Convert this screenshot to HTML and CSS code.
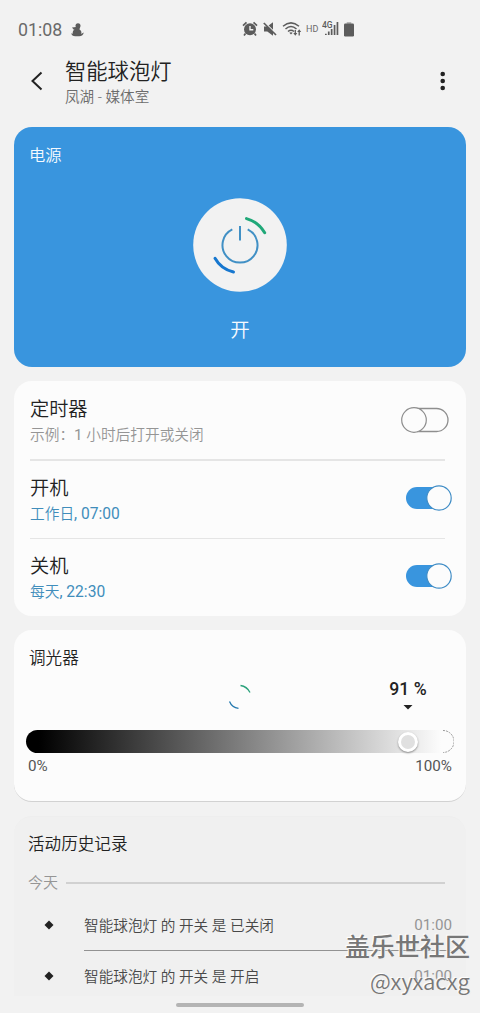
FILE: index.html
```html
<!DOCTYPE html>
<html lang="zh-CN">
<head>
<meta charset="utf-8">
<title>智能球泡灯</title>
<link rel="stylesheet" href="styles.css">
</head>
<body>
<div class="screen">
  <div class="status">
    <span class="clock">01:08</span>
    <svg class="app-icon" width="13" height="14" viewBox="0 0 13 14"><circle cx="7" cy="2.800" r="2.500"/><path d="M5 4h4L8.500 6.400c2 1.200 2.400 3.200 1.500 4.700l2.700-1.600c-.1 2-2 3.800-4.500 3.800H4.300C2 13.300.4 12 .3 10.300l1.500.5C1.300 8.500 2.300 6.700 4.800 6z"/><path d="M1 4.500l4-.5v3l-2.200-.2z"/></svg>
    <div class="status-icons">
      <svg width="16" height="16" viewBox="0 0 16 16"><path d="M1 4.600L4.500 1.300M15 4.600L11.500 1.300M3.500 12.500L2 14.500M12.500 12.500L14 14.500" stroke="#5c5c5c" stroke-width="1.700"/><circle cx="8" cy="8.300" r="6"/><path d="M8 5v3.800h3.300" fill="none" stroke="#f2f2f2" stroke-width="1.400"/></svg>
      <svg class="mute" width="14" height="16" viewBox="0 0 14 16"><path d="M1 5.500h3.300L10 1.300v13.400L4.300 10.500H1z"/><path d="M2.300 2l11 11" stroke="#f2f2f2" stroke-width="1.200"/><path d="M.8 2l12.200 12" stroke="#5c5c5c" stroke-width="1.700"/></svg>
      <svg class="wifi" width="20" height="16" viewBox="0 0 20 16"><g fill="none" stroke="#5c5c5c" stroke-width="1.500"><path d="M1 5.300Q9 -1.500 17 5.300M3.500 8Q9 3 14.500 8M6 10.500Q9 8 12 10.500"/><path d="M13.300 9v4M17.200 10.500v4" stroke-width="1.300"/></g><path d="M7.300 11.800Q9 10.500 10.700 11.800L9 13.600zM11.300 12h4l-2 2.700zM15.200 11h4l-2-2.700z"/></svg>
      <span class="hd">HD</span>
      <svg class="signal" width="18" height="16" viewBox="0 0 18 16"><text x="0" y="7" class="net">4G</text><path d="M3 12.700h1.700v1.300H3zM5.900 10.500h1.700V14H5.900zM8.800 8h1.700v6H8.800zM11.700 4h1.700v10h-1.700zM14.600 1h1.700v13h-1.700z"/></svg>
      <svg class="battery" width="10" height="15" viewBox="0 0 10 15"><path d="M2.700 0h4.600v3H2.700z" opacity=".4"/><rect y="1.500" width="10" height="13" rx="1.200"/></svg>
    </div>
  </div>
  <header class="header">
    <svg class="back" width="12" height="20" viewBox="0 0 12 20"><path d="M10.500 1.500L1.500 10l9 8.500"/></svg>
    <div class="heading"><div class="title">智能球泡灯</div><div class="subtitle">凤湖 - 媒体室</div></div>
    <svg class="more" width="6" height="20" viewBox="0 0 6 20"><circle cx="2.700" cy="3" r="2.300"/><circle cx="2.700" cy="10" r="2.300"/><circle cx="2.700" cy="17" r="2.300"/></svg>
  </header>
  <main class="cards">
    <section class="card power">
      <div class="power-label">电源</div>
      <svg class="power-button" width="94" height="94" viewBox="0 0 94 94"><circle cx="47" cy="47" r="46.800" fill="#f2f2f2"/><g fill="none" stroke-linecap="round"><path d="M39.300 31.400a17.500 17.500 0 1 0 15.400 0M47 28v14.500" stroke="#4190c5" stroke-width="2" stroke-linecap="butt"/><path d="M53.500 20.600Q65 23.500 71.700 34.700" stroke="#20a878" stroke-width="3"/><path d="M22 60.200Q28 71 40.500 74" stroke="#1777cf" stroke-width="3"/></g></svg>
      <div class="power-state">开</div>
    </section>
    <section class="card schedule">
      <div class="row"><div class="labels"><div class="name">定时器</div><div class="detail muted">示例：<span class="digit">1</span> 小时后打开或关闭</div></div>
        <svg class="switch-off" width="48" height="26" viewBox="0 0 48 26"><rect x="5" y="1.500" width="42" height="23" rx="11.500" fill="#fcfcfc" stroke="#8e8e8e" stroke-width="1.300"/><circle cx="13" cy="13" r="12.300" fill="#fcfcfc" stroke="#8e8e8e" stroke-width="1.200"/></svg></div>
      <div class="divider thick"></div>
      <div class="row second"><div class="labels"><div class="name">开机</div><div class="detail">工作日<span class="digits">, 07:00</span></div></div>
        <svg width="47" height="26" viewBox="0 0 47 26"><rect x="1" y="2" width="44" height="22" rx="11" fill="#3995de"/><circle cx="34" cy="13" r="12.200" fill="#fcfcfc" stroke="#408dc6" stroke-width="1.200"/></svg></div>
      <div class="divider"></div>
      <div class="row third"><div class="labels"><div class="name">关机</div><div class="detail">每天<span class="digits">, 22:30</span></div></div>
        <svg width="47" height="26" viewBox="0 0 47 26"><rect x="1" y="2" width="44" height="22" rx="11" fill="#3995de"/><circle cx="34" cy="13" r="12.200" fill="#fcfcfc" stroke="#408dc6" stroke-width="1.200"/></svg></div>
    </section>
    <section class="card dimmer">
      <div class="section-title">调光器</div>
      <div class="reading">
        <svg class="spinner" width="24" height="26" viewBox="0 0 24 26"><g fill="none" stroke-width="1.300"><path d="M12.500 1.500Q19 2.500 22 8.500" stroke="#2ba17b"/><path d="M1.500 17.500Q4 23.500 10.500 24.300" stroke="#2378ae"/></g></svg>
        <div class="value"><span>91 %</span><svg width="10" height="5" viewBox="0 0 10 5"><path d="M.5 0h9L5 4.500z"/></svg></div>
      </div>
      <div class="slider"><svg class="slider-cap" width="12" height="23" viewBox="0 0 12 23"><path d="M1 .5a11 11 0 0 1 0 22"/></svg><div class="thumb"></div></div>
      <div class="limits"><span>0%</span><span>100%</span></div>
    </section>
    <section class="card history">
      <div class="section-title">活动历史记录</div>
      <div class="day"><span>今天</span><i></i></div>
      <div class="event"><svg width="10" height="10" viewBox="0 0 10 10"><path d="M5 .5L9.500 5 5 9.500.5 5z"/></svg><span>智能球泡灯 的 开关 是 已关闭</span><time>01:00</time></div>
      <div class="event-line"></div>
      <div class="event"><svg width="10" height="10" viewBox="0 0 10 10"><path d="M5 .5L9.500 5 5 9.500.5 5z"/></svg><span>智能球泡灯 的 开关 是 开启</span><time>01:00</time></div>
    </section>
  </main>
  <div class="nav"></div>
  <div class="watermark"><div class="community">盖乐世社区</div><div class="user">@xyxacxg</div></div>
</div>
</body>
</html>
```
FILE: styles.css
```css
* { box-sizing: border-box; }
body {
  margin: 0;
  background: #f2f2f2;
  color: #222;
  font-family: Roboto, "Noto Sans CJK SC", sans-serif;
  font-weight: 350;
}
svg { display: block; flex: none; }
.screen { position: relative; width: 480px; height: 1013px; overflow: hidden; white-space: nowrap; }
.status { display: flex; align-items: center; height: 58px; padding: 1px 0 0 18px; color: #6a6a6a; }
.clock { width: 45px; font-size: 17.8px; font-weight: 400; line-height: 20px; }
.app-icon { margin-left: 8px; fill: #5c5c5c; }
.status-icons { display: flex; align-items: center; margin: -1px 0 0 158px; fill: #5c5c5c; }
.mute { margin-left: 5px; }
.wifi { margin-left: 5px; }
.hd { width: 12px; margin-left: 4px; font-size: 9px; font-weight: 400; line-height: 12px; }
.signal { margin-left: 4px; }
.net { font-size: 8.5px; font-weight: 500; }
.battery { margin-left: 4px; }
.header { display: flex; align-items: center; height: 69px; padding: 0 34px 24px 31px; }
.back { fill: none; stroke: #222; stroke-width: 2; }
.heading { flex: 1; padding: 5px 0 0 22px; }
.title { font-size: 21.3px; line-height: 28px; }
.subtitle { font-size: 14.6px; line-height: 22px; color: #6c6c6c; }
.more { fill: #222; }
.cards { display: flex; flex-direction: column; gap: 14px; padding: 0 14px; }
.card { border-radius: 18px; background: #fcfcfc; }
.power { display: flex; flex-direction: column; align-items: center; height: 240px; background: #3995de; color: #f5faff; }
.power-label { align-self: flex-start; padding: 17px 0 0 15px; font-size: 16.3px; line-height: 24px; }
.power-button { margin-top: 30px; }
.power-state { margin-top: 26px; font-size: 19.5px; line-height: 26px; }
.schedule { height: 235px; padding: 0 14px 0 16px; }
.row { display: flex; align-items: center; justify-content: space-between; height: 78px; }
.second, .third { height: 77px; padding-bottom: 3px; }
.labels { padding-top: 4px; }
.second .labels, .third .labels { padding-top: 6px; }
.name { font-size: 19.2px; line-height: 26px; }
.detail { font-size: 14.7px; line-height: 25px; color: #408dbb; }
.digits { font-size: 15.6px; font-weight: 400; line-height: 1; }
.digit { font-size: 15.2px; font-weight: 400; line-height: 1; }
.muted { color: #959595; }
.switch-off { margin-right: 3px; }
.divider { height: 1px; margin-right: 7px; background: #e5e5e5; }
.thick { height: 2px; }
.dimmer { height: 172px; padding: 17px 12px 0; border-bottom: 1px solid #d2d2d2; }
.section-title { font-size: 16.6px; line-height: 24px; }
.dimmer .section-title { padding-left: 3px; }
.reading { display: flex; height: 59px; padding: 7px 25px 0 202px; justify-content: space-between; }
.spinner { margin-top: 6px; }
.value { display: flex; flex-direction: column; align-items: center; font-size: 17.6px; line-height: 22px; font-weight: 500; width: 42px; }
.value svg { margin-top: 5px; fill: #222; }
.slider { display: flex; align-items: center; position: relative; width: 428px; height: 23px; border-radius: 12px; background: linear-gradient(90deg, #000 3%, #fcfcfc 97%); }
.slider-cap { margin-left: auto; fill: none; stroke: #999; stroke-width: 1; stroke-dasharray: 2 1; }
.thumb { position: absolute; left: 372px; width: 20px; height: 20px; border: 3px solid #fff; border-radius: 50%; background: #e0e0e0; box-shadow: 0 1px 2px #888; }
.limits { display: flex; justify-content: space-between; padding: 3px 2px 0; font-size: 15.2px; line-height: 20px; color: #555; font-weight: 400; }
.history { height: 180px; padding: 16px 14px 0; background: #f0f0f0; border-radius: 18px 18px 0 0; border-top: 1px solid #eeeeee; }
.day { display: flex; align-items: center; height: 20px; margin-top: 16px; font-size: 15px; color: #959595; }
.day span { width: 38px; margin-top: -3px; }
.day i { width: 379px; height: 2px; background: #d1d1d1; }
.event { display: flex; align-items: center; height: 50px; font-size: 14.65px; color: #484848; }
.event span { margin-top: -2px; }
.day + .event { margin-top: 7px; }
.event svg { margin: 0 30px 0 16px; fill: #222; }
.event time { margin-left: auto; font-size: 15.2px; font-weight: 400; color: #959595; }
.event-line { width: 368px; height: 1px; margin-left: 56px; background: #929292; }
.nav { width: 128px; height: 4px; margin: 7px auto 0; border-radius: 2px; background: #b4b4b4; }
.watermark { position: absolute; right: 10px; top: 931px; text-align: right; color: #777; text-shadow: -1px -1px 1px #fff, 1px 1px 1px #eee; }
.community { font-size: 25px; line-height: 34px; font-weight: 500; }
.user { font-family: "Noto Sans CJK SC", sans-serif; font-size: 22.2px; line-height: 30px; font-weight: 350; }
```
